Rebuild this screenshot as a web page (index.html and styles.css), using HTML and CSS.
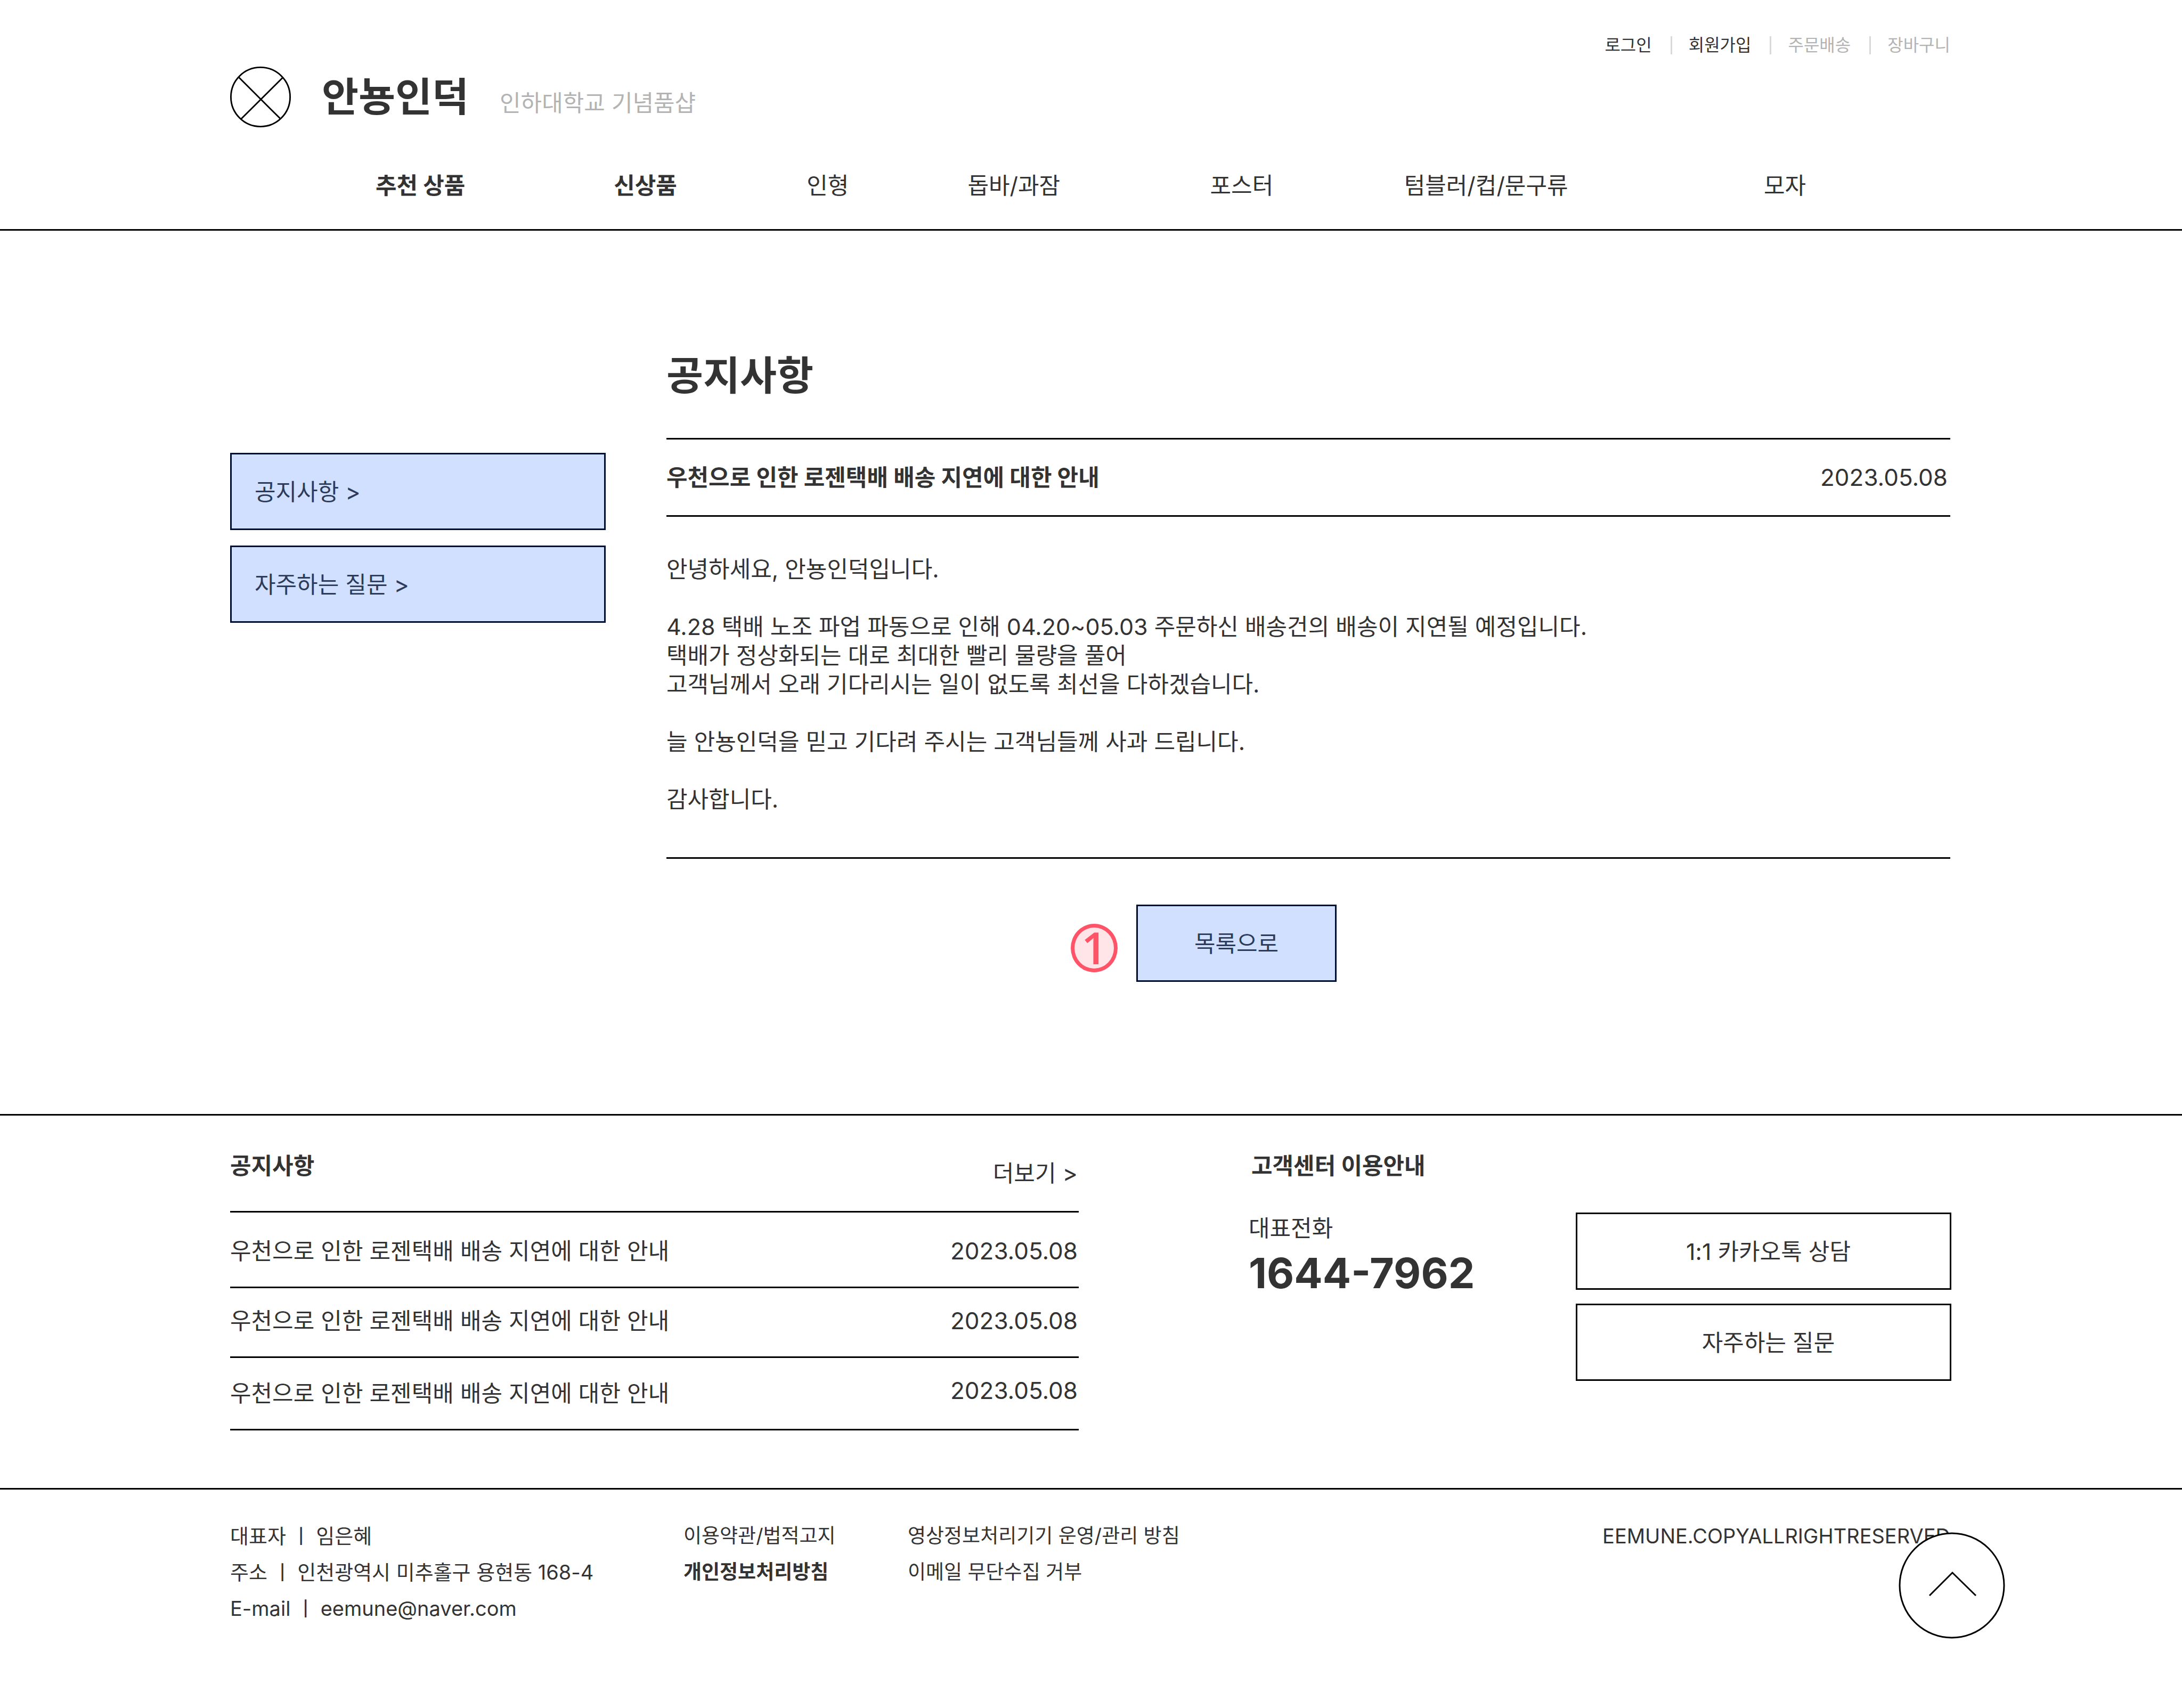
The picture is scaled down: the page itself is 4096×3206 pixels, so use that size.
FILE: index.html
```html
<!DOCTYPE html>
<html lang="ko">
<head>
<meta charset="utf-8">
<meta name="viewport" content="width=device-width, initial-scale=1">
<title>공지사항 - 안뇽인덕</title>
<link rel="stylesheet" href="styles.css">
</head>
<body>
<header class="header">
  <ul class="util">
    <li><a href="#">로그인</a></li>
    <li><a href="#">회원가입</a></li>
    <li><a class="muted" href="#">주문배송</a></li>
    <li><a class="muted" href="#">장바구니</a></li>
  </ul>
  <div class="brand">
    <svg class="logo" viewBox="0 0 160 160" fill="none" stroke="#000" stroke-width="4" aria-hidden="true">
      <circle cx="80" cy="80" r="78"/>
      <path d="M22 27.500 133 138M139.500 28 29 138"/>
    </svg>
    <div class="brand-text">
      <a class="brand-name" href="#">안뇽인덕</a>
      <span class="muted">인하대학교 기념품샵</span>
    </div>
  </div>
  <nav class="nav">
    <a class="strong" href="#">추천 상품</a>
    <a class="strong" href="#">신상품</a>
    <a href="#">인형</a>
    <a href="#">돕바/과잠</a>
    <a href="#">포스터</a>
    <a href="#">텀블러/컵/문구류</a>
    <a href="#">모자</a>
  </nav>
</header>

<main class="main">
  <aside class="side">
    <a class="box box-blue side-link" href="#">공지사항 &gt;</a>
    <a class="box box-blue side-link" href="#">자주하는 질문 &gt;</a>
  </aside>
  <article class="article">
    <h1 class="page-title">공지사항</h1>
    <div class="article-head">
      <h2 class="article-title">우천으로 인한 로젠택배 배송 지연에 대한 안내</h2>
      <time class="date" datetime="2023-05-08">2023.05.08</time>
    </div>
    <div class="article-body">
      <p>안녕하세요, 안뇽인덕입니다.</p>
      <p>4.28 택배 노조 파업 파동으로 인해 04.20~05.03 주문하신 배송건의 배송이 지연될 예정입니다.<br>택배가 정상화되는 대로 최대한 빨리 물량을 풀어<br>고객님께서 오래 기다리시는 일이 없도록 최선을 다하겠습니다.</p>
      <p>늘 안뇽인덕을 믿고 기다려 주시는 고객님들께 사과 드립니다.</p>
      <p>감사합니다.</p>
    </div>
    <div class="article-actions">
      <button class="box box-blue list-button" type="button">목록으로</button>
      <span class="marker">1</span>
    </div>
  </article>
</main>

<section class="info">
  <div class="notice">
    <div class="notice-head">
      <h2 class="info-title">공지사항</h2>
      <a class="more" href="#">더보기 &gt;</a>
    </div>
    <table class="notice-table">
      <tbody>
        <tr><td><a href="#">우천으로 인한 로젠택배 배송 지연에 대한 안내</a></td><td class="date">2023.05.08</td></tr>
        <tr><td><a href="#">우천으로 인한 로젠택배 배송 지연에 대한 안내</a></td><td class="date">2023.05.08</td></tr>
        <tr><td><a href="#">우천으로 인한 로젠택배 배송 지연에 대한 안내</a></td><td class="date">2023.05.08</td></tr>
      </tbody>
    </table>
  </div>
  <div class="support">
    <h2 class="info-title">고객센터 이용안내</h2>
    <div class="support-body">
      <div class="contact">
        <p>대표전화</p>
        <p class="phone">1644-7962</p>
      </div>
      <div class="support-links">
        <button class="box support-button" type="button">1:1 카카오톡 상담</button>
        <button class="box support-button" type="button">자주하는 질문</button>
      </div>
    </div>
  </div>
</section>

<footer class="footer">
  <address class="company">
    대표자 ㅣ 임은혜<br>
    주소 ㅣ 인천광역시 미추홀구 용현동 168-4<br>
    E-mail ㅣ eemune@naver.com
  </address>
  <div class="policies">
    <a href="#">이용약관/법적고지</a>
    <a class="strong" href="#">개인정보처리방침</a>
  </div>
  <div class="policies">
    <a href="#">영상정보처리기기 운영/관리 방침</a>
    <a href="#">이메일 무단수집 거부</a>
  </div>
  <p class="copyright">EEMUNE.COPYALLRIGHTRESERVED</p>
  <button class="to-top" type="button" aria-label="맨 위로">
    <svg viewBox="0 0 200 200" fill="none" stroke="#000" stroke-width="3" aria-hidden="true">
      <circle cx="100" cy="100" r="98" fill="#fff"/>
      <path d="M58 119 101 76 145 119"/>
    </svg>
  </button>
</footer>
</body>
</html>
```

FILE: styles.css
```css
* {
  box-sizing: border-box;
  margin: 0;
  padding: 0;
}

body {
  background: #fff;
  color: #333;
  font: 400 43px/54px Inter, "Noto Sans CJK KR", sans-serif;
}

a {
  color: inherit;
  text-decoration: none;
}

button {
  font: inherit;
  color: inherit;
  cursor: pointer;
}

ul {
  list-style: none;
}

.strong {
  font-weight: 700;
}

.muted {
  color: #b3b3b3;
}

.date {
  font-size: 44px;
}

.box {
  display: flex;
  align-items: center;
  height: 145px;
  border: 3px solid #000;
  background: #fff;
}

.box-blue {
  border-color: #000f2e;
  background: #d1e0ff;
  color: #2d3b5a;
}

/* Header */

.header {
  padding: 68px 435px 55px 432px;
  border-bottom: 3px solid #000;
}

.util {
  display: flex;
  justify-content: flex-end;
  font-size: 32px;
  line-height: 34px;
}

.util li + li {
  margin-left: 35px;
  padding-left: 31px;
  border-left: 3px solid #d9d9d9;
}

.brand {
  display: flex;
  align-items: center;
  gap: 58px;
  margin-top: 23px;
}

.logo {
  width: 114px;
  height: 114px;
}

.brand-text {
  display: flex;
  align-items: baseline;
  gap: 58px;
}

.brand-name {
  font-size: 75px;
  font-weight: 700;
  line-height: 90px;
}

.nav {
  display: grid;
  grid-template-columns: 447fr 362fr 302fr 455fr 364fr 675fr 350fr;
  margin-top: 82px;
  padding-left: 273px;
  white-space: nowrap;
}

/* Notice article */

.main {
  display: grid;
  grid-template-columns: 705px 1fr;
  gap: 114px;
  padding: 227px 435px 248px 432px;
}

.side {
  display: flex;
  flex-direction: column;
  gap: 29px;
  margin-top: 190px;
}

.side-link {
  padding-left: 43px;
}

.page-title {
  margin-bottom: 72px;
  font-size: 75px;
  line-height: 90px;
}

.article-head {
  display: flex;
  justify-content: space-between;
  padding: 44px 5px 44px 0;
  border-top: 3px solid #000;
  border-bottom: 3px solid #000;
}

.article-title,
.info-title {
  font-size: 43px;
}

.article-body {
  padding: 71px 0 82px;
  border-bottom: 3px solid #000;
}

.article-body p + p {
  margin-top: 54px;
}

.article-actions {
  position: relative;
  width: 376px;
  margin: 86px 0 0 882px;
}

.list-button {
  justify-content: center;
  width: 100%;
}

.marker {
  position: absolute;
  top: 36px;
  left: -123px;
  width: 88px;
  height: 91px;
  border: 7px solid #ff5468;
  border-radius: 50%;
  background: #ffe5e8;
  color: #ff5468;
  font: 600 84px/74px "Open Sans", sans-serif;
  text-align: center;
}

/* Notices and customer centre */

.info {
  display: grid;
  grid-template-columns: 1593px 1fr;
  gap: 319px;
  padding: 67px 433px 108px 432px;
  border-top: 3px solid #000;
}

.notice-head {
  display: flex;
  justify-content: space-between;
  height: 115px;
  border-bottom: 3px solid #000;
}

.more {
  padding: 14px 2px 0 0;
}

.notice-table {
  width: 100%;
  border-spacing: 0;
}

.notice-table td {
  padding: 45px 0 40px;
  border-bottom: 3px solid #000;
  vertical-align: top;
}

.notice-table tr:nth-child(2) td {
  padding-top: 34px;
}

.notice-table tr:nth-child(3) td {
  padding-top: 39px;
}

.notice-table .date,
.notice-table tr:nth-child(3) .date {
  padding-right: 2px;
  text-align: right;
}

.notice-table tr:nth-child(3) .date {
  padding-top: 34px;
}

.support .info-title {
  padding-left: 5px;
}

.support-body {
  display: grid;
  grid-template-columns: 1fr 705px;
  margin-top: 61px;
}

.contact {
  padding-top: 2px;
}

.phone {
  margin-top: 12px;
  font-size: 79px;
  font-weight: 700;
  line-height: 90px;
}

.support-links {
  display: flex;
  flex-direction: column;
  gap: 26px;
}

.support-button {
  justify-content: center;
  padding-left: 18px;
}

/* Footer */

.footer {
  position: relative;
  display: grid;
  grid-template-columns: 851px 421px 1fr auto;
  padding: 53px 435px 153px 432px;
  border-top: 3px solid #000;
  font-size: 37px;
  line-height: 68px;
}

.company,
.copyright {
  font-size: 38px;
  font-style: normal;
}

.policies {
  display: flex;
  flex-direction: column;
}

.to-top {
  position: absolute;
  top: 80px;
  right: 332px;
  width: 200px;
  height: 200px;
  border: 0;
  border-radius: 50%;
  background: none;
}

.to-top svg {
  display: block;
}
```
